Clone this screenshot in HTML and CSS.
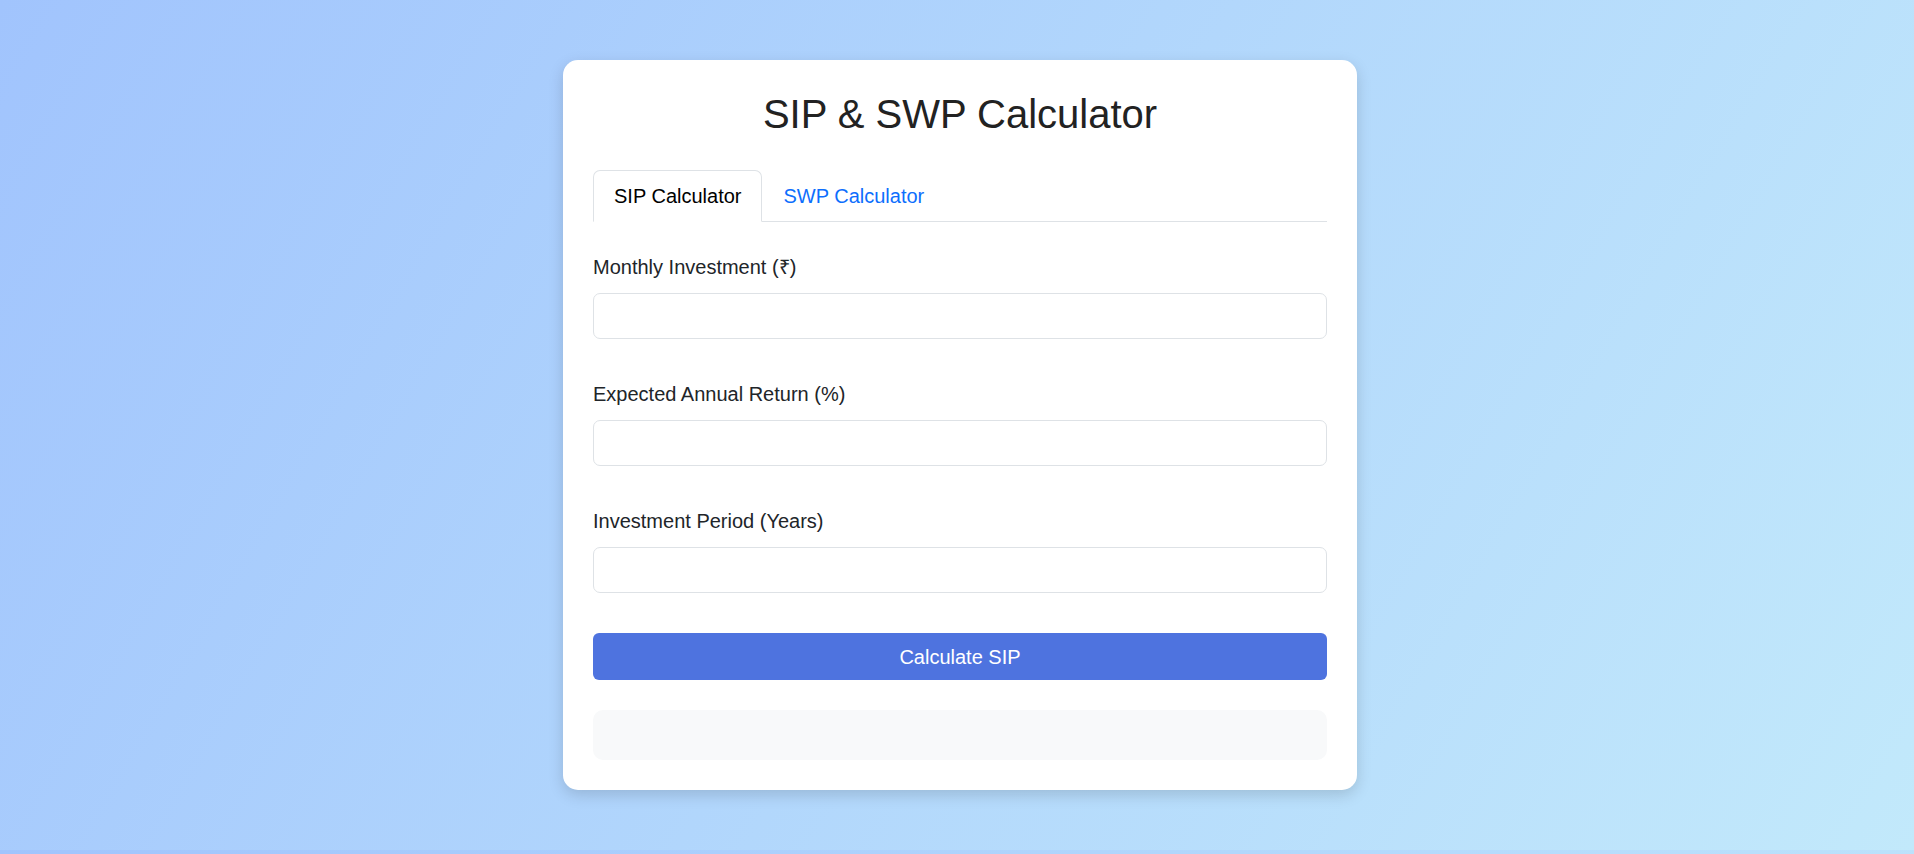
FILE: index.html
```html
<!DOCTYPE html>
<html lang="en">
<head>
<meta charset="utf-8">
<title>SIP &amp; SWP Calculator</title>
<link rel="stylesheet" href="styles.css">
</head>
<body>
<div class="card">
  <h1 class="title">SIP &amp; SWP Calculator</h1>
  <div class="tabs">
    <div class="tab active">SIP Calculator</div>
    <div class="tab">SWP Calculator</div>
  </div>
  <div class="group">
    <label class="label">Monthly Investment (₹)</label>
    <input class="input" type="text">
  </div>
  <div class="group">
    <label class="label">Expected Annual Return (%)</label>
    <input class="input" type="text">
  </div>
  <div class="group last">
    <label class="label">Investment Period (Years)</label>
    <input class="input" type="text">
  </div>
  <button class="btn">Calculate SIP</button>
  <div class="result"></div>
</div>
</body>
</html>
```
FILE: styles.css
```css
html {
  margin: 0;
}
body {
  margin: 0;
  padding: 0;
  font-family: "Liberation Sans", Arial, sans-serif;
  color: #212529;
  background: linear-gradient(120deg, #a1c4fd 0%, #c2e9fb 100%);
}
.card {
  width: 794px;
  box-sizing: border-box;
  margin: 60px 0 60px calc(50% - 394px);
  padding: 30px;
  background: #fff;
  border-radius: 15px;
  box-shadow: 0 5px 15px rgba(0, 0, 0, 0.15);
  display: flex;
  flex-direction: column;
}
.title {
  margin: 0 0 31px;
  font-size: 40px;
  line-height: 49px;
  font-weight: 400;
  text-align: center;
  color: #222;
}
.tabs {
  display: flex;
  border-bottom: 1px solid #dee2e6;
  margin-bottom: 30px;
}
.tab {
  font-size: 20px;
  line-height: 30px;
  padding: 10px 20px;
  border: 1px solid transparent;
  border-top-left-radius: 7px;
  border-top-right-radius: 7px;
  margin-bottom: -1px;
  color: #0d6efd;
}
.tab.active {
  color: #000;
  background: #fff;
  border-color: #dee2e6 #dee2e6 #fff;
}
.group {
  display: flex;
  flex-direction: column;
  margin-bottom: 40px;
}
.group.last {
  margin-bottom: 40px;
}
.label {
  font-size: 20px;
  line-height: 30px;
  margin-bottom: 11px;
  color: #212529;
}
.input {
  height: 46px;
  box-sizing: border-box;
  border: 1px solid #dee2e6;
  border-radius: 7px;
  padding: 7px 15px;
  font-size: 20px;
  font-family: inherit;
  background: #fff;
  outline: none;
}
.btn {
  height: 47px;
  border: 0;
  border-radius: 6px;
  background: #4e73df;
  color: #fff;
  font-family: inherit;
  font-size: 20px;
  line-height: 30px;
  padding: 0;
  cursor: pointer;
}
.result {
  margin-top: 30px;
  height: 50px;
  background: #f8f9fa;
  border-radius: 10px;
}
```
